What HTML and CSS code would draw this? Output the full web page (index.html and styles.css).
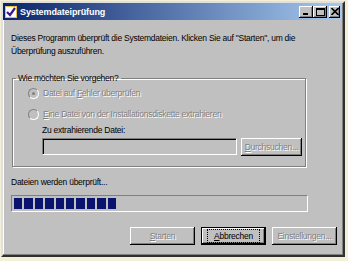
FILE: index.html
```html
<!DOCTYPE html>
<html lang="de">
<head>
  <meta charset="UTF-8">
  <title>Systemdateiprüfung</title>
  <link rel="stylesheet" href="styles.css">
</head>
<body>
  <div class="window">
    <!-- Titelleiste -->
    <div class="titlebar">
      <svg class="app-icon" width="12" height="12" viewBox="0 0 12 12">
        <rect x="0.5" y="0.5" width="11" height="11" fill="#fff" stroke="#e8c040"/>
        <path d="M2 6 L5 9 L10 2" fill="none" stroke="#3a1a8a" stroke-width="2.2"/>
      </svg>
      <span class="title">Systemdateiprüfung</span>
      <div class="caption-buttons">
        <span class="cap-btn">
          <svg width="8" height="7" viewBox="0 0 8 7"><rect x="1" y="5" width="5" height="2" fill="#000"/></svg>
        </span>
        <span class="cap-btn">
          <svg width="9" height="8" viewBox="0 0 9 8"><rect x="0.5" y="0.5" width="8" height="7" fill="none" stroke="#000"/><rect x="0" y="0" width="9" height="2" fill="#000"/></svg>
        </span>
        <span class="cap-btn close">
          <svg width="8" height="7" viewBox="0 0 8 7"><path d="M0.5 0 L7.5 7 M7.5 0 L0.5 7" stroke="#000" stroke-width="1.6"/></svg>
        </span>
      </div>
    </div>

    <!-- Inhalt -->
    <div class="client">
      <p class="intro">Dieses Programm überprüft die Systemdateien. Klicken Sie auf "Starten", um die<br>Überprüfung auszuführen.</p>

      <fieldset class="group">
        <legend>Wie möchten Sie vorgehen?</legend>
        <div class="radio-row">
          <span class="radio checked"></span>
          <span class="disabled">Datei auf <u>F</u>ehler überprüfen</span>
        </div>
        <div class="radio-row">
          <span class="radio"></span>
          <span class="disabled"><u>E</u>ine Datei von der Installationsdiskette extrahieren</span>
        </div>
        <div class="file-label">Zu extrahierende Datei:</div>
        <div class="file-row">
          <div class="file-input"></div>
          <div class="btn small"><span class="disabled"><u>D</u>urchsuchen...</span></div>
        </div>
      </fieldset>

      <div class="status">Dateien werden überprüft...</div>
      <div class="progress">
        <span class="block"></span><span class="block"></span><span class="block"></span><span class="block"></span><span class="block"></span>
        <span class="block"></span><span class="block"></span><span class="block"></span><span class="block"></span><span class="block"></span>
      </div>

      <div class="buttons">
        <div class="btn"><span class="disabled"><u>S</u>tarten</span></div>
        <div class="btn default"><span class="focus"><u>A</u>bbrechen</span></div>
        <div class="btn"><span class="disabled">Einstellungen...</span></div>
      </div>
    </div>
  </div>
</body>
</html>
```

FILE: styles.css
```css
body {
  margin: 0;
  padding: 0;
  background-color: #f4f0d8;
  font-family: 'Liberation Sans', Arial, sans-serif;
  font-size: 8.5px;
  letter-spacing: -0.25px;
  color: black;
}

.window {
  margin: 1px 0 0 1px;
  width: 340px;
  height: 252px;
  background-color: #c0c0c0;
  border: 2px solid;
  border-color: #e0e0e0 #303030 #303030 #e0e0e0;
  box-shadow: inset -1px -1px 0 #808080, inset 1px 1px 0 #fff;
  display: flex;
  flex-direction: column;
}

.titlebar {
  height: 17px;
  margin: 0 1px 0 0;
  background: linear-gradient(to right, #0a246a, #a6caf0);
  display: flex;
  align-items: center;
  padding-left: 2px;
}

.app-icon {
  margin-right: 3px;
}

.title {
  color: white;
  font-weight: bold;
  font-size: 9px;
  letter-spacing: -0.1px;
  flex: 1;
}

.caption-buttons {
  display: flex;
  align-items: center;
  padding-right: 2px;
}

.cap-btn {
  width: 14px;
  height: 12px;
  background-color: #c0c0c0;
  box-shadow: inset -1px -1px 0 #000, inset 1px 1px 0 #fff, inset -2px -2px 0 #808080;
  display: flex;
  align-items: center;
  justify-content: center;
}

.cap-btn.close {
  margin-left: 2px;
  width: 11px;
}

.client {
  flex: 1;
  padding: 12px 0 0 8px;
}

.intro {
  margin: 0;
  white-space: nowrap;
  line-height: 13px;
}

.group {
  margin: 15px 0 0 1px;
  width: 294px;
  height: 94px;
  padding: 0;
  border: 1px solid #808080;
  box-shadow: 1px 1px 0 #fff, inset 1px 1px 0 #fff;
  box-sizing: border-box;
}

.group legend {
  padding: 0 2px;
  margin-left: 3px;
  line-height: 11px;
}

.disabled {
  color: #808080;
  text-shadow: 1px 1px 0 #fff;
}

.radio-row {
  display: flex;
  align-items: center;
  margin-left: 15px;
  height: 12px;
  margin-top: 3px;
}

.radio-row + .radio-row {
  margin-top: 9px;
}

.radio {
  width: 9px;
  height: 9px;
  border-radius: 50%;
  background-color: #c0c0c0;
  border: 1px solid;
  border-color: #808080 #fff #fff #808080;
  margin-right: 4px;
  display: flex;
  align-items: center;
  justify-content: center;
}

.radio.checked::after {
  content: "";
  width: 3px;
  height: 3px;
  border-radius: 50%;
  background-color: #808080;
}

.file-label {
  margin: 5px 0 0 29px;
  line-height: 11px;
}

.file-row {
  display: flex;
  margin: 2px 0 0 29px;
  gap: 4px;
}

.file-input {
  width: 195px;
  height: 17px;
  box-sizing: border-box;
  background-color: #c0c0c0;
  border: 1px solid;
  border-color: #808080 #fff #fff #808080;
  box-shadow: inset 1px 1px 0 #000;
}

.status {
  margin-top: 10px;
  line-height: 11px;
}

.progress {
  margin-top: 7px;
  width: 297px;
  height: 17px;
  box-sizing: border-box;
  border: 1px solid;
  border-color: #808080 #fff #fff #808080;
  padding: 2px;
  display: flex;
  gap: 2px;
}

.block {
  width: 8.4px;
  background-color: #08146e;
}

.buttons {
  display: flex;
  justify-content: flex-end;
  gap: 6px;
  margin: 15px 6px 0 0;
}

.btn {
  width: 65px;
  height: 18px;
  box-sizing: border-box;
  background-color: #c0c0c0;
  box-shadow: inset -1px -1px 0 #000, inset 1px 1px 0 #fff, inset -2px -2px 0 #808080;
  display: flex;
  align-items: center;
  justify-content: center;
}

.btn.small {
  width: 61px;
}

.btn.default {
  border: 1px solid #000;
}

.focus {
  outline: 1px dotted #000;
  padding: 1px 6px;
}
```
